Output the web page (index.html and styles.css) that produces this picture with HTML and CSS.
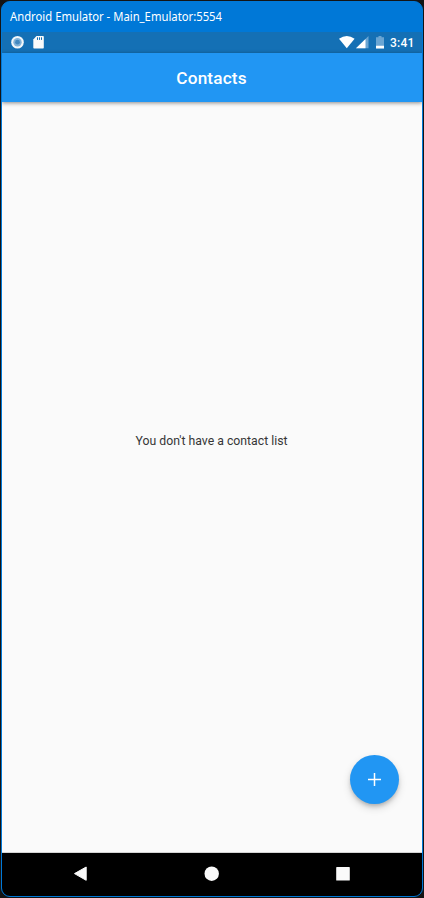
FILE: index.html
```html
<!DOCTYPE html>
<html lang="en">
<head>
<meta charset="utf-8">
<title>Contacts</title>
<link rel="stylesheet" href="styles.css">
</head>
<body>
<div class="window">
  <div class="titlebar"><svg width="240" height="30"><text x="8" y="19" textLength="212" lengthAdjust="spacingAndGlyphs">Android Emulator - Main_Emulator:5554</text></svg></div>
  <div class="statusbar">
    <svg class="notices" width="50" height="21" viewBox="0 0 50 21">
      <circle cx="15.500" cy="10.200" r="6.300" fill="#f2f7fa"/>
      <circle cx="15.500" cy="10.200" r="4.200" fill="#82b3d9"/>
      <circle cx="15.500" cy="10.200" r="2.400" fill="#4288c0"/>
      <path d="M34.500 4h6.500a.8.8 0 0 1 .8.8v10.900a.8.8 0 0 1-.8.8h-8.900a.8.8 0 0 1-.8-.8V7.500z" fill="#fafafa"/>
      <path d="M35.500 5.300v2.600M37.500 5.300v2.600M39.500 5.300v2.600" stroke="#1470b5" stroke-width="1"/>
    </svg>
    <svg class="signals" width="46" height="21" viewBox="0 0 46 21">
      <path d="M0 6.700Q7.800 1.500 15.600 6.700L7.800 16.200z" fill="#fff"/>
      <path d="M29.500 4v12.200H17z" fill="#6aa5d3"/>
      <path d="M26.500 7v9.200H17z" fill="#fff"/>
      <path d="M39.500 4h3v1.200H45v11h-8v-11h2.500z" fill="#6aa5d3"/>
      <path d="M37 13.800h8v2.600h-8z" fill="#fff"/>
    </svg>
    <span class="clock">3:41</span>
  </div>
  <header class="appbar">Contacts</header>
  <main class="content">
    <p class="empty">You don't have a contact list</p>
    <button class="fab" aria-label="Add contact">
      <svg width="13" height="13" viewBox="0 0 13 13"><path d="M6.500 0v13M0 6.500h13" stroke="#fff" stroke-width="1.500"/></svg>
    </button>
  </main>
  <nav class="navbar">
    <svg width="14" height="16" viewBox="0 0 14 16"><path d="M12.200 1v13.300L.5 7.600z" fill="#fafafa" stroke="#fafafa" stroke-linejoin="round"/></svg>
    <svg width="16" height="16" viewBox="0 0 16 16"><circle cx="7.700" cy="7.700" r="7.200" fill="#fafafa"/></svg>
    <svg width="14" height="14" viewBox="0 0 14 14"><rect x=".2" y=".1" width="13.600" height="13.400" rx=".6" fill="#fafafa"/></svg>
  </nav>
</div>
</body>
</html>
```
FILE: styles.css
```css
* { box-sizing: border-box; }
body {
  margin: 0;
  height: 898px;
  padding: 1px;
  background: #141414;
  font-family: Roboto, sans-serif;
  overflow: hidden;
}
.window {
  width: 422px;
  height: 896px;
  display: flex;
  flex-direction: column;
  border: 1px solid #0078d7;
  border-radius: 9px;
  overflow: hidden;
  background: #0078d7;
}
.titlebar { height: 30px; }
.titlebar svg { display: block; }
.titlebar text {
  font: 12px "Noto Sans", "Open Sans", sans-serif;
  fill: #fff;
}
.statusbar {
  height: 21px;
  display: flex;
  background: #1470b5;
  color: #fff;
}
.signals { margin-left: auto; }
.clock {
  width: 37px;
  padding-left: 5px;
  font-size: 12px;
  font-weight: 500;
  line-height: 22px;
  letter-spacing: 0.2px;
}
.appbar {
  height: 49px;
  padding-right: 1px;
  background: #2196f3;
  color: #fff;
  font-size: 17.2px;
  font-weight: 500;
  line-height: 51px;
  text-align: center;
  letter-spacing: 0.15px;
  box-shadow: 0 1px 4px rgba(0, 0, 0, 0.45);
  z-index: 1;
}
.content {
  flex: 1;
  position: relative;
  display: flex;
  align-items: center;
  justify-content: center;
  padding: 0 1px 73px 0;
  background: #fafafa;
  border-bottom: 1px solid #d4d4d4;
}
.empty {
  margin: 0;
  color: #363636;
  font-size: 12.25px;
  line-height: 16px;
}
.fab {
  position: absolute;
  right: 23px;
  bottom: 48px;
  width: 49px;
  height: 49px;
  padding: 0;
  display: flex;
  align-items: center;
  justify-content: center;
  border: 0;
  border-radius: 50%;
  background: #2196f3;
  box-shadow: 0 3px 4px -1px rgba(0, 0, 0, 0.22), 0 4px 8px rgba(0, 0, 0, 0.14);
}
.navbar {
  height: 43px;
  display: flex;
  align-items: center;
  justify-content: space-between;
  padding: 0 72px 2px;
  background: #000;
}
```
